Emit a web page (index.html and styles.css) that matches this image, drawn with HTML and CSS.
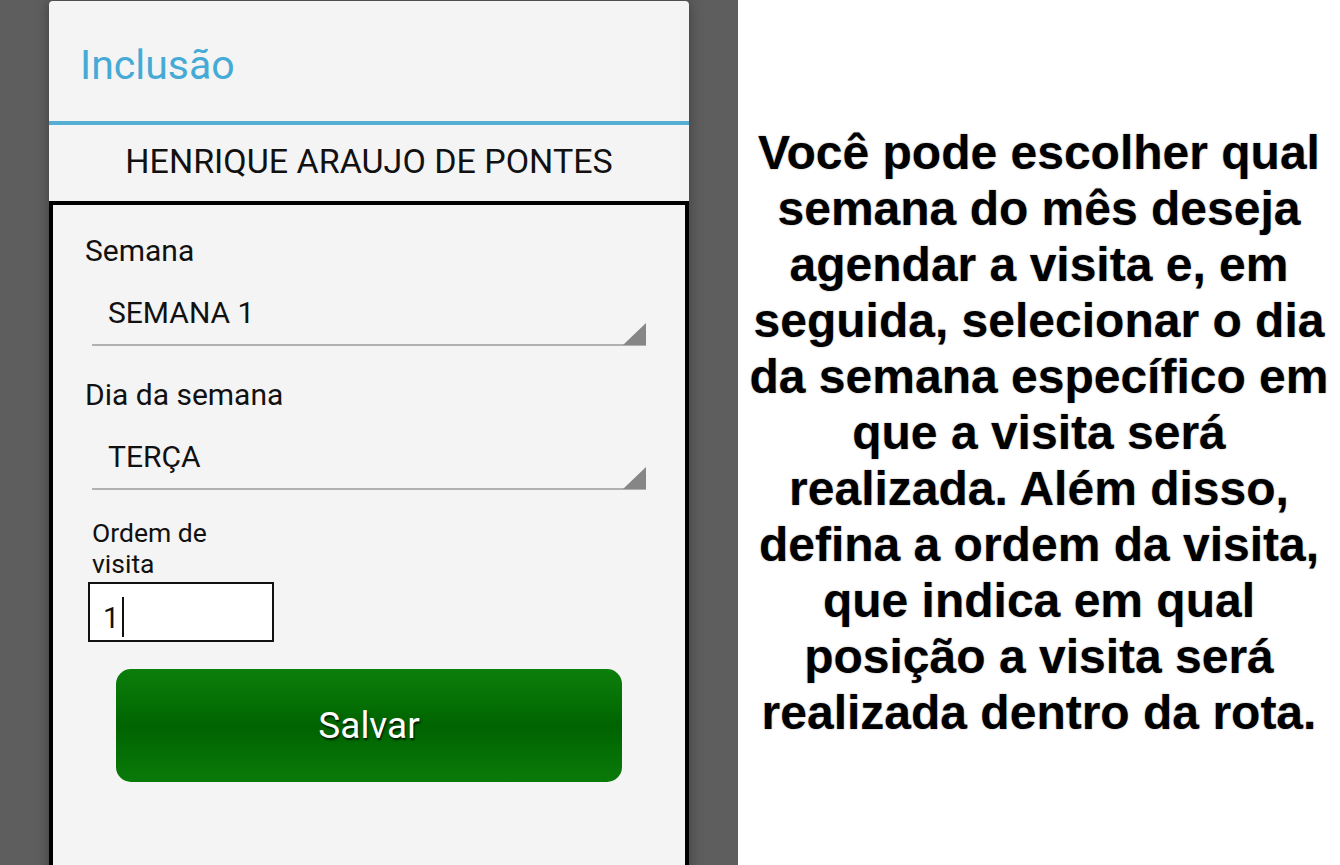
FILE: index.html
```html
<!DOCTYPE html>
<html lang="pt">
<head>
<meta charset="utf-8">
<title>Inclusão</title>
<link rel="stylesheet" href="styles.css">
</head>
<body>
<div class="phone">
  <div class="card">
    <div class="dlg-header">Inclusão</div>
    <div class="dlg-divider"></div>
    <div class="dlg-name">HENRIQUE ARAUJO DE PONTES</div>
    <div class="dlg-body">
      <div class="label first">Semana</div>
      <div class="spinner">
        <span class="spinner-text">SEMANA 1</span>
        <svg class="spinner-arrow" width="23" height="22" viewBox="0 0 23 22"><polygon points="23,0 23,22 0,22" fill="#868686"/></svg>
      </div>
      <div class="label">Dia da semana</div>
      <div class="spinner">
        <span class="spinner-text">TERÇA</span>
        <svg class="spinner-arrow" width="23" height="22" viewBox="0 0 23 22"><polygon points="23,0 23,22 0,22" fill="#868686"/></svg>
      </div>
      <div class="label-small">Ordem de visita</div>
      <div class="input"><span class="input-value">1</span><span class="caret"></span></div>
      <div class="btn">Salvar</div>
    </div>
  </div>
</div>
<div class="caption">
  <p class="caption-text">Você pode escolher qual<br>semana do mês deseja<br>agendar a visita e, em<br>seguida, selecionar o dia<br>da semana específico em<br>que a visita será<br>realizada. Além disso,<br>defina a ordem da visita,<br>que indica em qual<br>posição a visita será<br>realizada dentro da rota.</p>
</div>
</body>
</html>
```
FILE: styles.css
```css
html, body {
  margin: 0;
  padding: 0;
  height: 100%;
}
body {
  display: flex;
  width: 1340px;
  height: 865px;
  overflow: hidden;
  background: #ffffff;
}
.phone {
  width: 738px;
  flex: none;
  height: 865px;
  background: #5e5e5e;
  overflow: hidden;
  padding-top: 1px;
  box-sizing: border-box;
}
.card {
  margin-left: 49px;
  width: 640px;
  height: 900px;
  background: #f4f4f4;
  border-radius: 4px 4px 0 0;
  box-shadow: 0 0 14px rgba(0, 0, 0, 0.35);
  display: flex;
  flex-direction: column;
  font-family: Roboto, "Noto Sans", sans-serif;
}
.dlg-header {
  height: 120px;
  box-sizing: border-box;
  padding: 40px 0 0 31px;
  font-size: 41px;
  line-height: 48px;
  color: #45abd6;
}
.dlg-divider {
  height: 4px;
  background: #55aed4;
}
.dlg-name {
  height: 76px;
  box-sizing: border-box;
  padding-top: 16px;
  text-align: center;
  font-size: 34px;
  line-height: 40px;
  color: #111;
}
.dlg-body {
  flex: 1;
  border: 4px solid #000;
  border-bottom: none;
  background: #f4f4f4;
  display: flex;
  flex-direction: column;
  align-items: flex-start;
}
.label {
  margin: 32px 0 0 32px;
  font-size: 30px;
  line-height: 34px;
  color: #111;
}
.label.first {
  margin-top: 29px;
}
.spinner {
  margin: 28px 0 0 39px;
  width: 554px;
  height: 48px;
  border-bottom: 2px solid #b0b0b0;
  display: flex;
  align-items: flex-start;
}
.spinner-text {
  flex: 1;
  padding-left: 16px;
  font-size: 30px;
  line-height: 34px;
  color: #111;
}
.spinner-arrow {
  align-self: flex-end;
  display: block;
  margin-bottom: -1px;
}
.label-small {
  width: 140px;
  margin: 27px 0 0 39px;
  font-size: 26.5px;
  line-height: 31px;
  color: #111;
}
.input {
  margin: 3px 0 0 35px;
  width: 186px;
  height: 60px;
  box-sizing: border-box;
  border: 2px solid #111;
  background: #fff;
  display: flex;
  align-items: flex-start;
  padding: 13px 0 0 13px;
}
.input-value {
  font-size: 29px;
  line-height: 34px;
  color: #111;
  margin-top: 4px;
}
.caret {
  width: 2px;
  height: 40px;
  background: #111;
  margin-left: 3px;
}
.btn {
  margin: 27px 0 0 63px;
  width: 506px;
  height: 113px;
  border-radius: 15px;
  background: linear-gradient(to bottom, #0b7e0b 0%, #057005 30%, #006400 50%, #056f05 75%, #097a09 100%);
  color: #fff;
  font-size: 37px;
  display: flex;
  align-items: center;
  justify-content: center;
  text-shadow: 1px 2px 2px rgba(0, 0, 0, 0.75);
}
.caption {
  flex: 1;
  display: flex;
  align-items: center;
  justify-content: center;
  background: #fff;
}
.caption-text {
  margin: 0;
  text-align: center;
  white-space: nowrap;
  font-family: "Liberation Sans", Arial, sans-serif;
  font-weight: bold;
  font-size: 48px;
  line-height: 56px;
  color: #000;
  text-shadow: 0 0 2px rgba(0, 0, 0, 0.35);
}
```
